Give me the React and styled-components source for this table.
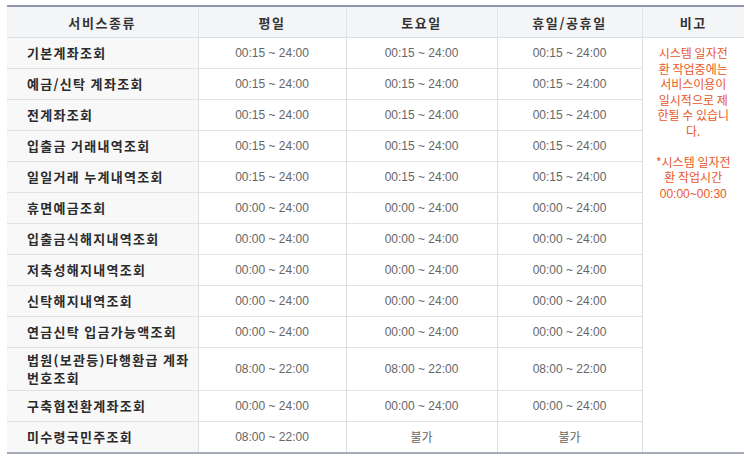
import React from "react";
import styled, { createGlobalStyle } from "styled-components";

const Global = createGlobalStyle`
  html, body { margin: 0; padding: 0; background: #fff; }
  body { font-family: "Noto Sans CJK KR", "Noto Sans", sans-serif; }
`;

const Wrap = styled.div`
  padding: 5px 6px 0 7px;
`;

const Table = styled.table`
  width: 737px;
  table-layout: fixed;
  border-collapse: collapse;
  border-top: 2px solid #8f98aa;
  border-bottom: 2px solid #a4abb9;
`;

const Th = styled.th`
  height: 30px;
  padding: 0;
  background: #f4f5f7;
  color: #333;
  font-family: "Noto Sans CJK KR", sans-serif;
  font-size: 13px;
  font-weight: 700;
  letter-spacing: 1.6px;
  text-align: center;
  border-bottom: 1px solid #dcdfe5;
  border-left: ${(p) => (p.$first ? "none" : "1px solid #e3e5ea")};
`;

const Row = styled.tr`
  height: ${(p) => (p.$tall ? "43px" : "31px")};
`;

const Name = styled.td`
  padding: 0 0 0 20px;
  background: #f8f8f9;
  color: #2b2b2b;
  font-family: "Noto Sans CJK KR", sans-serif;
  font-size: 13px;
  font-weight: 700;
  letter-spacing: 1.3px;
  line-height: 18px;
  text-align: left;
  border-bottom: 1px solid #dfe2e7;
`;

const Time = styled.td`
  padding: 0;
  color: #666;
  font-family: "Liberation Sans", Arial, sans-serif;
  font-size: 12px;
  text-align: center;
  border-bottom: 1px solid #dfe2e7;
  border-left: 1px solid #d9dde4;
`;

const Ko = styled.span`
  font-family: "Noto Sans CJK KR", sans-serif;
  font-size: 12px;
  color: #666;
`;

const Note = styled.td`
  padding: 7px 0 0;
  vertical-align: top;
  text-align: center;
  color: #e8582a;
  font-family: "Noto Sans CJK KR", sans-serif;
  font-size: 12px;
  line-height: 15.5px;
  border-left: 1px solid #d9dde4;
`;

const NoteTime = styled.span`
  font-family: "Liberation Sans", Arial, sans-serif;
`;

const rows = [
  ["기본계좌조회", "00:15 ~ 24:00", "00:15 ~ 24:00", "00:15 ~ 24:00"],
  ["예금/신탁 계좌조회", "00:15 ~ 24:00", "00:15 ~ 24:00", "00:15 ~ 24:00"],
  ["전계좌조회", "00:15 ~ 24:00", "00:15 ~ 24:00", "00:15 ~ 24:00"],
  ["입출금 거래내역조회", "00:15 ~ 24:00", "00:15 ~ 24:00", "00:15 ~ 24:00"],
  ["일일거래 누계내역조회", "00:15 ~ 24:00", "00:15 ~ 24:00", "00:15 ~ 24:00"],
  ["휴면예금조회", "00:00 ~ 24:00", "00:00 ~ 24:00", "00:00 ~ 24:00"],
  ["입출금식해지내역조회", "00:00 ~ 24:00", "00:00 ~ 24:00", "00:00 ~ 24:00"],
  ["저축성해지내역조회", "00:00 ~ 24:00", "00:00 ~ 24:00", "00:00 ~ 24:00"],
  ["신탁해지내역조회", "00:00 ~ 24:00", "00:00 ~ 24:00", "00:00 ~ 24:00"],
  ["연금신탁 입금가능액조회", "00:00 ~ 24:00", "00:00 ~ 24:00", "00:00 ~ 24:00"],
  [["법원(보관등)타행환급 계좌", "번호조회"], "08:00 ~ 22:00", "08:00 ~ 22:00", "08:00 ~ 22:00"],
  ["구축협전환계좌조회", "00:00 ~ 24:00", "00:00 ~ 24:00", "00:00 ~ 24:00"],
  ["미수령국민주조회", "08:00 ~ 22:00", "불가", "불가"],
];

const cell = (v) => (/^\d/.test(v) ? v : <Ko>{v}</Ko>);

export default function App() {
  return (
    <Wrap>
      <Global />
      <Table>
        <colgroup>
          <col style={{ width: 191 }} />
          <col style={{ width: 148 }} />
          <col style={{ width: 151 }} />
          <col style={{ width: 145 }} />
          <col style={{ width: 102 }} />
        </colgroup>
        <thead>
          <tr>
            <Th $first>서비스종류</Th>
            <Th>평일</Th>
            <Th>토요일</Th>
            <Th>휴일/공휴일</Th>
            <Th>비고</Th>
          </tr>
        </thead>
        <tbody>
          {rows.map((r, i) => {
            const tall = Array.isArray(r[0]);
            return (
              <Row key={i} $tall={tall}>
                <Name>
                  {tall ? (
                    <>
                      {r[0][0]}
                      <br />
                      {r[0][1]}
                    </>
                  ) : (
                    r[0]
                  )}
                </Name>
                <Time>{cell(r[1])}</Time>
                <Time>{cell(r[2])}</Time>
                <Time>{cell(r[3])}</Time>
                {i === 0 && (
                  <Note rowSpan={rows.length}>
                    시스템 일자전
                    <br />환 작업중에는
                    <br />서비스이용이
                    <br />일시적으로 제
                    <br />한될 수 있습니
                    <br />다.
                    <br />
                    <br />*시스템 일자전
                    <br />환 작업시간
                    <br />
                    <NoteTime>00:00~00:30</NoteTime>
                  </Note>
                )}
              </Row>
            );
          })}
        </tbody>
      </Table>
    </Wrap>
  );
}
